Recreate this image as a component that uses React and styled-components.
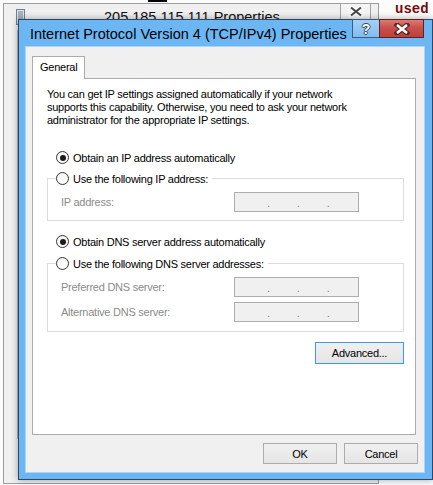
import React from 'react';
import styled, { createGlobalStyle } from 'styled-components';

const GlobalStyle = createGlobalStyle`
  html, body { margin: 0; padding: 0; background: #fff; }
  body { font-family: "Liberation Sans", Arial, sans-serif; }
  * { box-sizing: border-box; }
`;

const Desktop = styled.div`
  position: relative;
  width: 433px;
  height: 485px;
  overflow: hidden;
  background: #fcfcfc;
`;

const TopScrap = styled.div`
  position: absolute;
  left: 148px;
  top: 0;
  width: 19px;
  height: 2px;
  background: #000;
`;

const UsedLabel = styled.div`
  position: absolute;
  left: 395px;
  top: 1px;
  font-family: "Liberation Mono", "Courier New", monospace;
  font-weight: bold;
  font-size: 14px;
  line-height: 16px;
  color: #7a0a0a;
`;

/* window lying behind the dialog */
const BackWindow = styled.div`
  position: absolute;
  left: 3px;
  top: 3px;
  width: 376px;
  height: 481px;
  border: 1px solid #9d9d9d;
  background: #f0f0f0;
  display: flex;
  flex-direction: column;
`;

const BackTitleRow = styled.div`
  display: flex;
  align-items: flex-start;
  height: 25px;
`;

const BackIcon = styled.svg`
  margin: 5px 0 0 12px;
  flex: none;
`;

const BackTitle = styled.div`
  flex: 1;
  padding: 5px 0 0 79px;
  font-size: 14.5px;
  line-height: 17px;
  color: #111;
  white-space: nowrap;
`;

const BackClose = styled.div`
  width: 31px;
  height: 17px;
  margin: -1px 7px 0 0;
  border: 1px solid #a3a3a3;
  background: #f4f4f4;
  display: flex;
  align-items: center;
  justify-content: center;
`;

const BackPanel = styled.div`
  margin: 1px 0 0 13px;
  height: 409px;
  border: 1px solid #b3b3b3;
  background: #fff;
`;

/* the dialog itself */
const Dialog = styled.div`
  position: absolute;
  left: 18px;
  top: 19px;
  width: 415px;
  height: 461px;
  border: 1px solid #2e4863;
  background: #6cb6f4;
  box-shadow: 0 0 7px rgba(0, 0, 0, 0.35);
  display: flex;
  flex-direction: column;
  padding: 0 8px 7px 7px;
`;

const TitleBar = styled.div`
  display: flex;
  align-items: flex-start;
  height: 27px;
  flex: none;
`;

const DialogTitle = styled.div`
  flex: 1;
  padding: 6px 0 0 4px;
  font-size: 14.5px;
  line-height: 17px;
  color: #000;
  white-space: nowrap;
`;

const CaptionButtons = styled.div`
  display: flex;
  margin-top: -1px;
`;

const HelpButton = styled.div`
  width: 27px;
  height: 19px;
  border: 1px solid #3d5c7b;
  border-right: none;
  background: linear-gradient(#a4d0f7, #82bcef);
  display: flex;
  align-items: center;
  justify-content: center;
  font-weight: bold;
  font-size: 14px;
  color: #fff;
  text-shadow: 1px 0 #34495e, -1px 0 #34495e, 0 1px #34495e, 0 -1px #34495e;
`;

const CloseButton = styled.div`
  width: 45px;
  height: 19px;
  border: 1px solid #5b2222;
  background: linear-gradient(#dd7a72, #c8504b 45%, #c03e39);
  display: flex;
  align-items: center;
  justify-content: center;
`;

const Client = styled.div`
  flex: 1;
  background: #f0f0f0;
  box-shadow: 0 0 0 1px #a9d5fa;
  display: flex;
  flex-direction: column;
  padding: 9px 6px 8px 6px;
`;

const Tab = styled.div`
  align-self: flex-start;
  height: 23px;
  margin-bottom: -1px;
  position: relative;
  z-index: 1;
  padding: 0 7px;
  border: 1px solid #acacac;
  border-bottom: none;
  background: #fff;
  font-size: 11px;
  letter-spacing: -0.25px;
  line-height: 21px;
`;

const Panel = styled.div`
  flex: 1;
  margin-right: 2px;
  border: 1px solid #acacac;
  background: #fff;
  padding: 9px 11px 0 14px;
  display: flex;
  flex-direction: column;
  font-size: 11px;
  letter-spacing: -0.25px;
  color: #000;
`;

const Intro = styled.p`
  margin: 0;
  line-height: 13px;
`;

const RadioRow = styled.label`
  display: flex;
  align-items: center;
  gap: 4px;
  height: 15px;
  margin-top: ${p => p.$top || 0}px;
  margin-left: ${p => p.$indent || 0}px;
  white-space: nowrap;
`;

const RadioCircle = styled.span`
  width: 13px;
  height: 13px;
  border-radius: 50%;
  border: 1px solid #333;
  background: linear-gradient(#f4f4f4, #fff);
  display: flex;
  align-items: center;
  justify-content: center;
  flex: none;
  &::after {
    content: '';
    width: 6px;
    height: 6px;
    border-radius: 50%;
    background: ${p => (p.$checked ? '#1b1b1b' : 'transparent')};
  }
`;

const Group = styled.fieldset`
  margin: ${p => p.$top}px 0 0 0;
  padding: 6px 0 ${p => p.$bottom}px 8px;
  border: 1px solid #dcdcdc;
  min-width: 0;
  display: flex;
  flex-direction: column;
  gap: 5px;
`;

const GroupLegend = styled.legend`
  padding: 0 4px 0 0;
`;

const FieldRow = styled.div`
  display: flex;
  align-items: center;
  height: 20px;
`;

const FieldLabel = styled.span`
  flex: 0 0 178px;
  padding-left: 5px;
  color: #8b8b8b;
`;

const IpBox = styled.div`
  width: 125px;
  height: 20px;
  border: 1px solid #adadad;
  background: #f0f0f0;
  display: flex;
  align-items: flex-end;
  gap: 27px;
  padding: 0 0 3px 32px;
`;

const Dot = styled.span`
  font-size: 11px;
  line-height: 9px;
  color: #7e7e7e;
`;

const PushButton = styled.button`
  width: ${p => p.$w}px;
  height: ${p => p.$h}px;
  border: 1px solid ${p => (p.$focus ? '#3c97ef' : '#acacac')};
  background: linear-gradient(#f0f0f0, #e5e5e5);
  font-family: "Liberation Sans", Arial, sans-serif;
  font-size: 11px;
  letter-spacing: -0.25px;
  color: #000;
  padding: 0;
`;

const AdvancedWrap = styled.div`
  display: flex;
  justify-content: flex-end;
  margin-top: 10px;
`;

const ButtonRow = styled.div`
  display: flex;
  justify-content: flex-end;
  gap: 7px;
  margin-top: 8px;
`;

const Radio = ({ checked, label, top, indent }) => (
  <RadioRow $top={top} $indent={indent}>
    <RadioCircle $checked={checked} />
    {label}
  </RadioRow>
);

const IpField = ({ label }) => (
  <FieldRow>
    <FieldLabel>{label}</FieldLabel>
    <IpBox>
      <Dot>.</Dot>
      <Dot>.</Dot>
      <Dot>.</Dot>
    </IpBox>
  </FieldRow>
);

export default function App() {
  return (
    <Desktop>
      <GlobalStyle />
      <TopScrap />
      <BackWindow>
        <BackTitleRow>
          <BackIcon width="9" height="16" viewBox="0 0 9 16">
            <rect x="0.5" y="0.5" width="8" height="15" fill="#dbe3ec" stroke="#6f8197" />
            <path d="M2 3h5M2 5h5M2 7h5M2 9h5M2 11h5" stroke="#6f8197" strokeWidth="1" />
          </BackIcon>
          <BackTitle>205.185.115.111 Properties</BackTitle>
          <BackClose>
            <svg width="14" height="11" viewBox="0 0 14 11">
              <path d="M2 1.5L12 9.5M12 1.5L2 9.5" stroke="#fff" strokeWidth="4.5" strokeLinecap="square" />
              <path d="M2 1.5L12 9.5M12 1.5L2 9.5" stroke="#4a4a4a" strokeWidth="2.2" />
            </svg>
          </BackClose>
        </BackTitleRow>
        <BackPanel />
      </BackWindow>
      <UsedLabel>used</UsedLabel>

      <Dialog>
        <TitleBar>
          <DialogTitle>Internet Protocol Version 4 (TCP/IPv4) Properties</DialogTitle>
          <CaptionButtons>
            <HelpButton>?</HelpButton>
            <CloseButton>
              <svg width="16" height="12" viewBox="0 0 16 12">
                <path d="M3 2L13 10M13 2L3 10" stroke="#5a2a2a" strokeWidth="5" strokeLinecap="square" />
                <path d="M3 2L13 10M13 2L3 10" stroke="#fff" strokeWidth="2.6" />
              </svg>
            </CloseButton>
          </CaptionButtons>
        </TitleBar>
        <Client>
          <Tab>General</Tab>
          <Panel>
            <Intro>
              You can get IP settings assigned automatically if your network
              <br />
              supports this capability. Otherwise, you need to ask your network
              <br />
              administrator for the appropriate IP settings.
            </Intro>
            <Radio checked label="Obtain an IP address automatically" top={23} indent={9} />
            <Group $top={6} $bottom={8}>
              <GroupLegend>
                <Radio label="Use the following IP address:" />
              </GroupLegend>
              <IpField label="IP address:" />
            </Group>
            <Radio checked label="Obtain DNS server address automatically" top={13} indent={9} />
            <Group $top={7} $bottom={9}>
              <GroupLegend>
                <Radio label="Use the following DNS server addresses:" />
              </GroupLegend>
              <IpField label="Preferred DNS server:" />
              <IpField label="Alternative DNS server:" />
            </Group>
            <AdvancedWrap>
              <PushButton $w={89} $h={22} $focus>Advanced...</PushButton>
            </AdvancedWrap>
          </Panel>
          <ButtonRow>
            <PushButton $w={74} $h={21}>OK</PushButton>
            <PushButton $w={74} $h={21}>Cancel</PushButton>
          </ButtonRow>
        </Client>
      </Dialog>
    </Desktop>
  );
}
